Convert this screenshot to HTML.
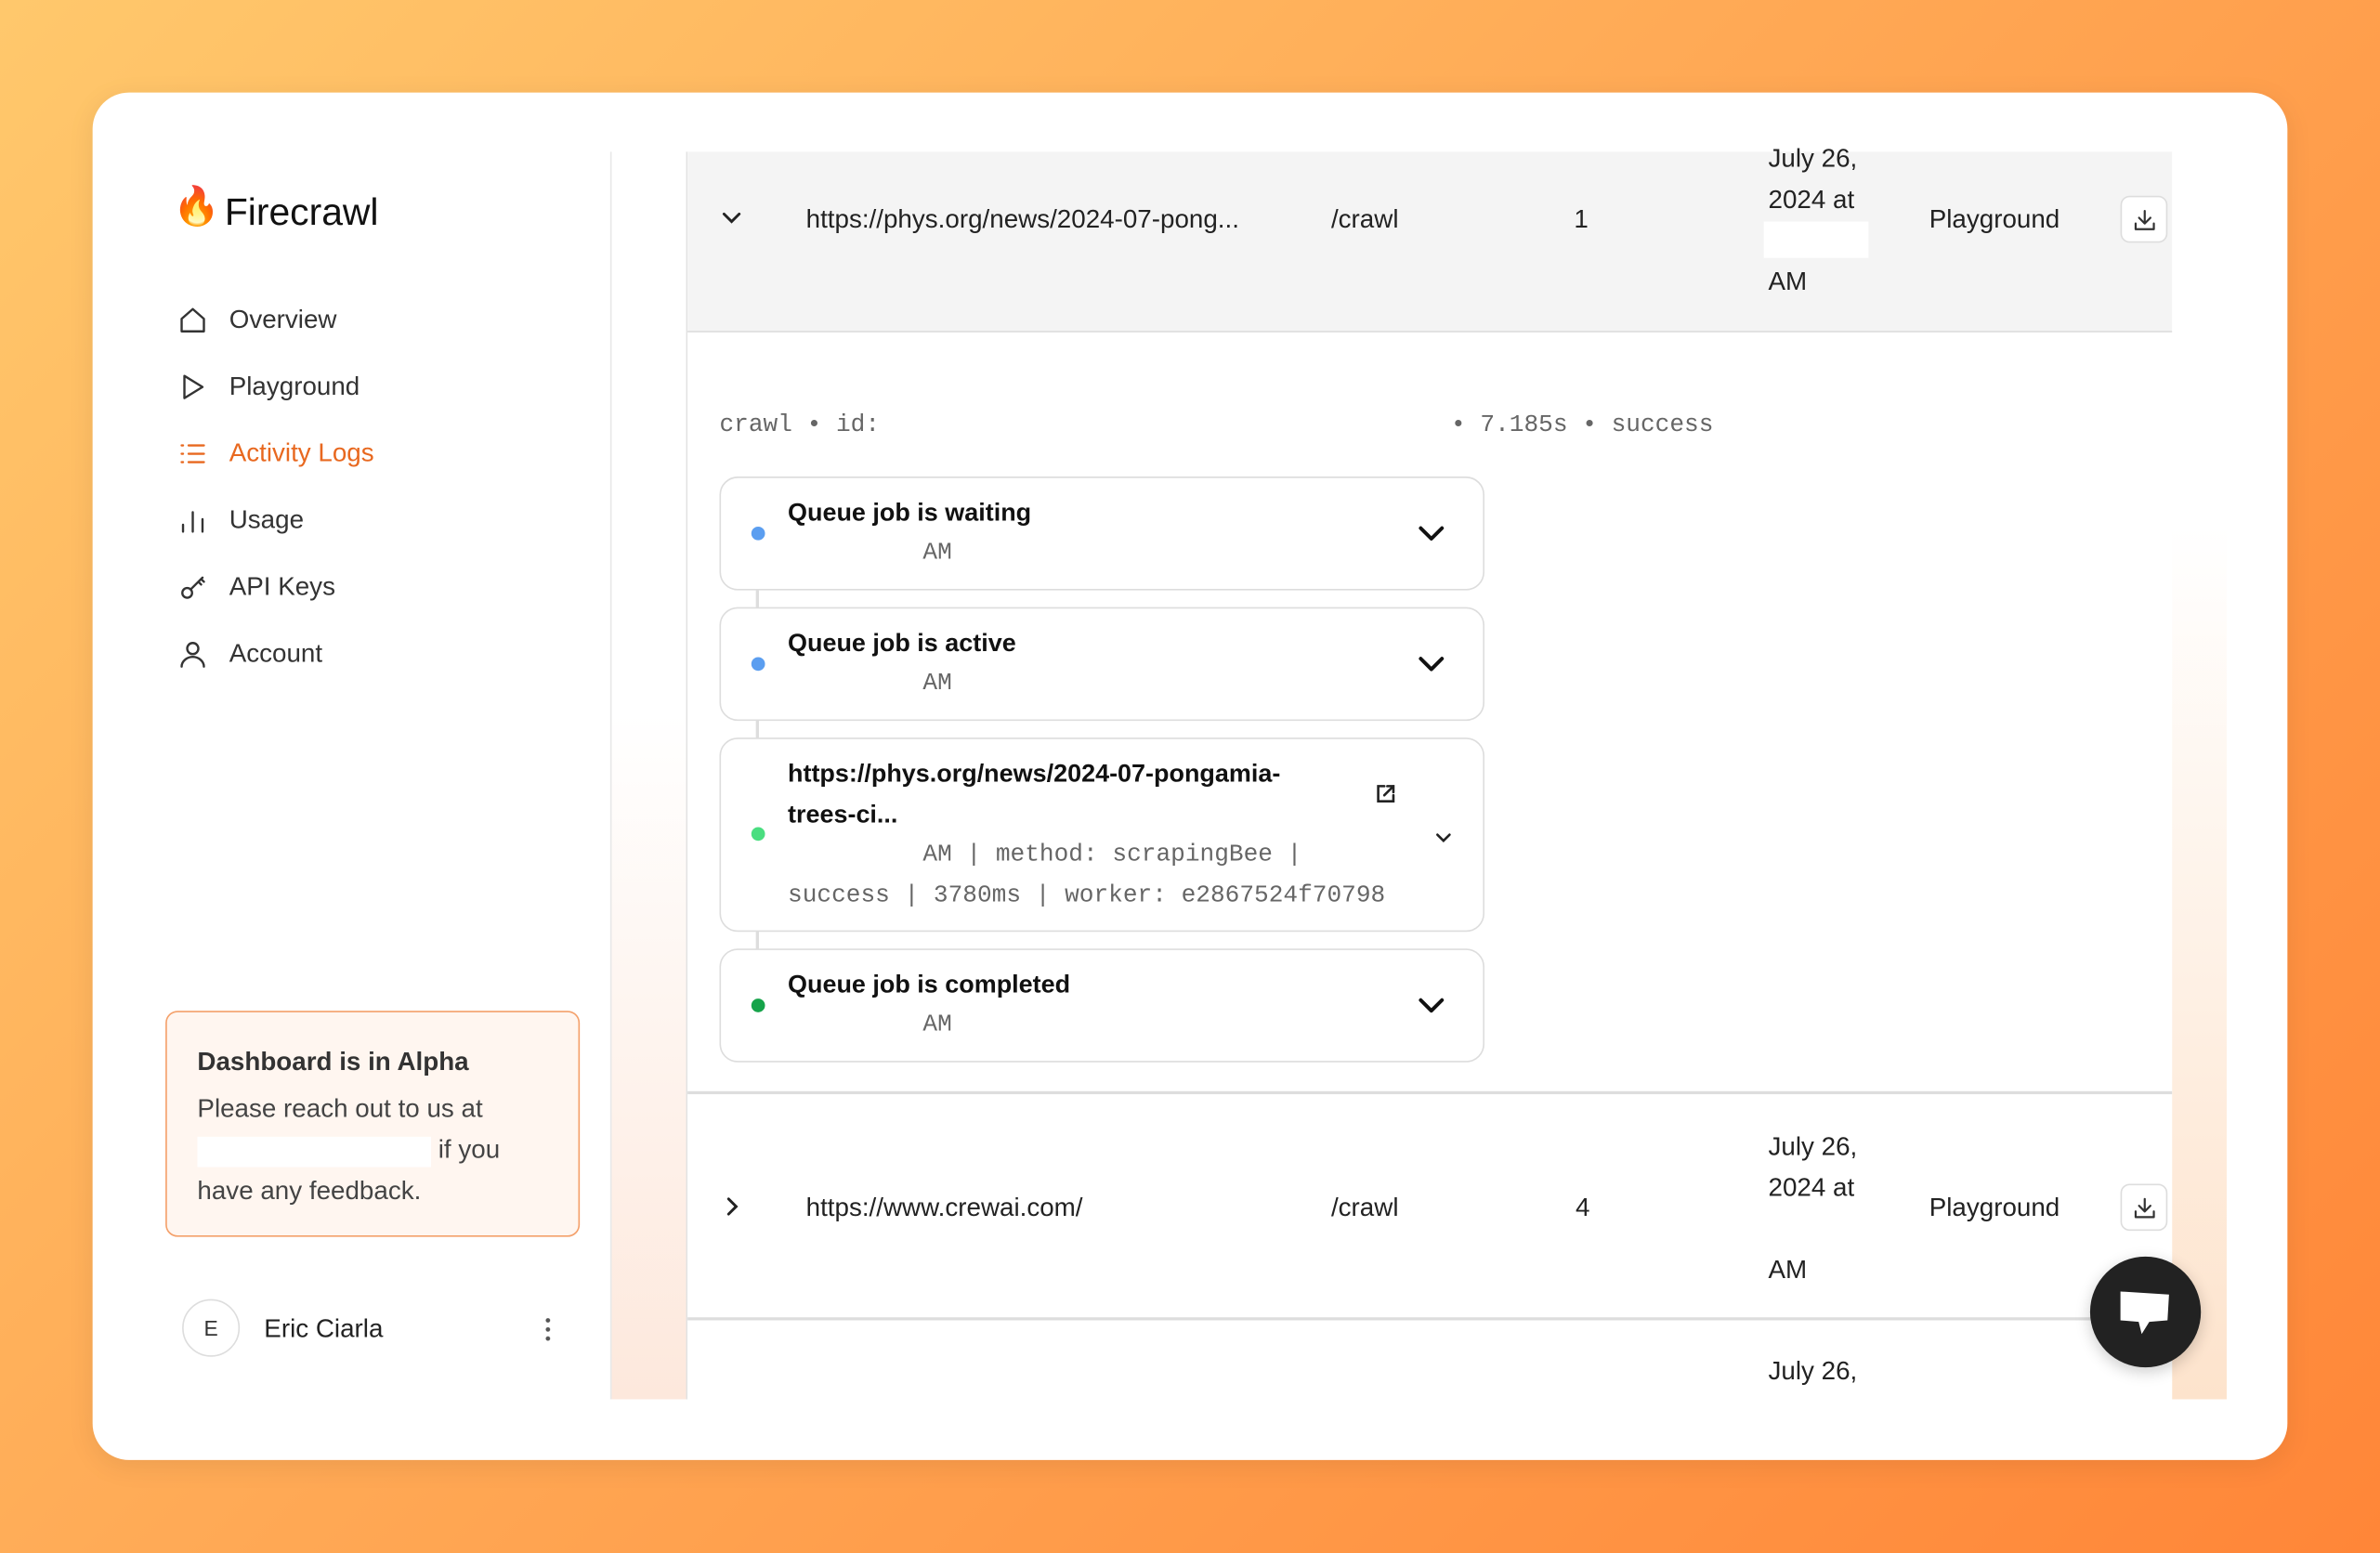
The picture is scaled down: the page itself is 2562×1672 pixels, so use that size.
<!DOCTYPE html>
<html><head><meta charset="utf-8"><style>
*{box-sizing:border-box;margin:0;padding:0}
html,body{width:2562px;height:1672px;overflow:hidden}
body{background:linear-gradient(135deg,#ffc86c 0%,#ffa955 45%,#ff8638 100%);font-family:"Liberation Sans",sans-serif;color:#1a1a1a}
#w{position:absolute;left:0;top:0;width:1568px;height:1023px;transform:scale(1.63393);transform-origin:0 0}
.a{position:absolute}
.card{left:61px;top:61px;width:1446px;height:901px;background:#fff;border-radius:24px;box-shadow:0 4px 18px rgba(0,0,0,.08)}
.nav{left:116px;font-size:17px;color:#333;display:flex;align-items:center;height:24px}
.nav svg{width:22px;height:22px;margin-right:13px;fill:none;stroke:#333;stroke-width:1.6;stroke-linecap:round;stroke-linejoin:round}
.mono{font-family:"Liberation Mono",monospace;color:#666;font-size:16px}
.jc{left:474px;width:504px;border:1.5px solid #ddd;border-radius:12px;background:#fff}
.dot{position:absolute;left:20px;width:9px;height:9px;border-radius:50%}
.t{position:absolute;left:44px;font-size:16.5px;font-weight:bold;color:#111}
.chev{position:absolute;right:24px;width:20px;height:20px;fill:none;stroke:#111;stroke-width:2.4;stroke-linecap:round;stroke-linejoin:round}
.cell{font-size:17px;color:#222}
.dl{width:31px;height:31px;border:1px solid #ddd;border-radius:6px;background:#fff;display:flex;align-items:center;justify-content:center}
.dl svg{width:18px;height:18px;fill:none;stroke:#333;stroke-width:1.8;stroke-linecap:round;stroke-linejoin:round}
</style></head><body><div id="w">
<div class="a card"></div>
<div class="a" style="left:402px;top:100px;width:51px;height:822px;background:linear-gradient(180deg,#fff 0%,#fff 45%,#fde8dc 100%);border-left:1px solid #e8e8e8;border-right:1px solid #e2e2e2"></div>
<div class="a" style="left:1431px;top:100px;width:36px;height:822px;background:linear-gradient(180deg,#fff 0%,#fff 30%,#fde3cc 100%)"></div>
<div class="a" style="left:453px;top:100px;width:978px;height:822px;background:#fff"></div>
<div class="a" style="left:114px;top:122px;font-size:25px">🔥</div>
<div class="a" style="left:148px;top:126px;font-size:25px;color:#111">Firecrawl</div>
<div class="a nav" style="top:199px"><svg viewBox="0 0 24 24"><path d="M4 11l8-7 8 7v9H4z"/></svg>Overview</div>
<div class="a nav" style="top:243px"><svg viewBox="0 0 24 24"><path d="M6 4l13 8-13 8z"/></svg>Playground</div>
<div class="a nav" style="top:287px;color:#e8681f"><svg viewBox="0 0 24 24" style="stroke:#e8681f"><path d="M4 6h1M4 12h1M4 18h1M9 6h11M9 12h11M9 18h11"/></svg>Activity Logs</div>
<div class="a nav" style="top:331px"><svg viewBox="0 0 24 24"><path d="M5 20v-5M12 20V6M19 20v-9"/></svg>Usage</div>
<div class="a nav" style="top:375px"><svg viewBox="0 0 24 24"><circle cx="8" cy="16" r="3.5"/><path d="M10.5 13.5L19 5M16 8l2 2M18 6l2 2"/></svg>API Keys</div>
<div class="a nav" style="top:419px"><svg viewBox="0 0 24 24"><circle cx="12" cy="8" r="4"/><path d="M4 21c0-4 4-7 8-7s8 3 8 7"/></svg>Account</div>
<div class="a" style="left:109px;top:666px;width:273px;height:149px;border:1.5px solid #f4a06a;border-radius:8px;background:#fff6f0"></div>
<div class="a" style="left:130px;top:690px;font-size:17px;font-weight:bold;color:#333">Dashboard is in Alpha</div>
<div class="a" style="left:130px;top:717px;font-size:17px;color:#444;line-height:27px;width:240px">Please reach out to us at<br><span style="display:inline-block;width:154px;height:20px;background:#fff;vertical-align:middle"></span> if you<br>have any feedback.</div>
<div class="a" style="left:120px;top:856px;width:38px;height:38px;border:1.5px solid #ddd;border-radius:50%;text-align:center;line-height:36px;font-size:14px;color:#333">E</div>
<div class="a" style="left:174px;top:866px;font-size:17px;color:#222">Eric Ciarla</div>
<div class="a" style="left:359px;top:867px;width:4px;height:18px;background:radial-gradient(circle,#555 1.3px,transparent 1.6px) 0 0/4px 6px"></div>
<div class="a" style="left:453px;top:100px;width:978px;height:119px;background:#f4f4f4;border-bottom:1.5px solid #ddd"></div>
<svg class="a" style="left:475px;top:137px;width:14px;height:14px;fill:none;stroke:#222;stroke-width:1.8;stroke-linecap:round" viewBox="0 0 14 14"><path d="M2 4l5 5 5-5"/></svg>
<div class="a cell" style="left:531px;top:135px">https://phys.org/news/2024-07-pong...</div>
<div class="a cell" style="left:877px;top:135px">/crawl</div>
<div class="a cell" style="left:1037px;top:135px">1</div>
<div class="a cell" style="left:1165px;top:95px">July 26,</div>
<div class="a cell" style="left:1165px;top:122px">2024 at</div>
<div class="a" style="left:1162px;top:146px;width:69px;height:24px;background:#fff"></div>
<div class="a cell" style="left:1165px;top:176px">AM</div>
<div class="a cell" style="left:1271px;top:135px">Playground</div>
<div class="a dl" style="left:1397px;top:129px"><svg viewBox="0 0 24 24"><path d="M12 4v11M7 10l5 5 5-5M4 15v5h16v-5"/></svg></div>
<div class="a mono" style="left:474px;top:271px">crawl • id:</div>
<div class="a mono" style="left:956px;top:271px">• 7.185s • success</div>
<div class="a" style="left:498px;top:388px;width:1.5px;height:240px;background:#ddd"></div>
<div class="a jc" style="top:314px;height:75px"><div class="dot" style="top:32px;background:#5b9ef0"></div><div class="t" style="top:14px">Queue job is waiting</div><div class="mono" style="position:absolute;left:133px;top:40px">AM</div><svg class="chev" style="top:27px" viewBox="0 0 20 20"><path d="M3 6l7 7 7-7"/></svg></div>
<div class="a jc" style="top:400px;height:75px"><div class="dot" style="top:32px;background:#5b9ef0"></div><div class="t" style="top:14px">Queue job is active</div><div class="mono" style="position:absolute;left:133px;top:40px">AM</div><svg class="chev" style="top:27px" viewBox="0 0 20 20"><path d="M3 6l7 7 7-7"/></svg></div>
<div class="a jc" style="top:486px;height:128px"><div class="dot" style="top:58px;background:#4ade80"></div>
<div class="t" style="top:10px;line-height:27px;width:360px">https://phys.org/news/2024-07-pongamia-<br>trees-ci...</div>
<div class="mono" style="position:absolute;left:44px;top:63px;line-height:27px;width:420px"><span style="display:inline-block;width:89px"></span>AM | method: scrapingBee |<br>success | 3780ms | worker: e2867524f70798</div>
<svg style="position:absolute;left:431px;top:29px;width:14px;height:14px;fill:none;stroke:#222;stroke-width:1.6;stroke-linecap:round" viewBox="0 0 14 14"><path d="M6 2H2v10h10V8M8 2h4v4M12 2L6 8"/></svg>
<svg style="position:absolute;left:470px;top:59px;width:12px;height:12px;fill:none;stroke:#222;stroke-width:1.6;stroke-linecap:round" viewBox="0 0 12 12"><path d="M2 4l4 4 4-4"/></svg></div>
<div class="a jc" style="top:625px;height:75px"><div class="dot" style="top:32px;background:#16a34a"></div><div class="t" style="top:14px">Queue job is completed</div><div class="mono" style="position:absolute;left:133px;top:40px">AM</div><svg class="chev" style="top:27px" viewBox="0 0 20 20"><path d="M3 6l7 7 7-7"/></svg></div>
<div class="a" style="left:453px;top:719px;width:978px;height:1.5px;background:#ddd"></div>
<svg class="a" style="left:475px;top:788px;width:14px;height:14px;fill:none;stroke:#222;stroke-width:1.8;stroke-linecap:round" viewBox="0 0 14 14"><path d="M5 2l5 5-5 5"/></svg>
<div class="a cell" style="left:531px;top:786px">https://www.crewai.com/</div>
<div class="a cell" style="left:877px;top:786px">/crawl</div>
<div class="a cell" style="left:1038px;top:786px">4</div>
<div class="a cell" style="left:1165px;top:746px">July 26,</div>
<div class="a cell" style="left:1165px;top:773px">2024 at</div>
<div class="a cell" style="left:1165px;top:827px">AM</div>
<div class="a cell" style="left:1271px;top:786px">Playground</div>
<div class="a dl" style="left:1397px;top:780px"><svg viewBox="0 0 24 24"><path d="M12 4v11M7 10l5 5 5-5M4 15v5h16v-5"/></svg></div>
<div class="a" style="left:453px;top:868px;width:978px;height:1.5px;background:#ddd"></div>
<div class="a cell" style="left:1165px;top:894px">July 26,</div>
<div class="a" style="left:1377px;top:828px;width:73px;height:73px;border-radius:50%;background:#222;box-shadow:0 3px 10px rgba(0,0,0,.2)"></div>
<svg class="a" style="left:1393px;top:846px;width:40px;height:36px" viewBox="0 0 40 36"><path d="M4 5l32 2-1 17-12 1-5 8-2-8-12-1z" fill="#fff"/></svg>
</div></body></html>
